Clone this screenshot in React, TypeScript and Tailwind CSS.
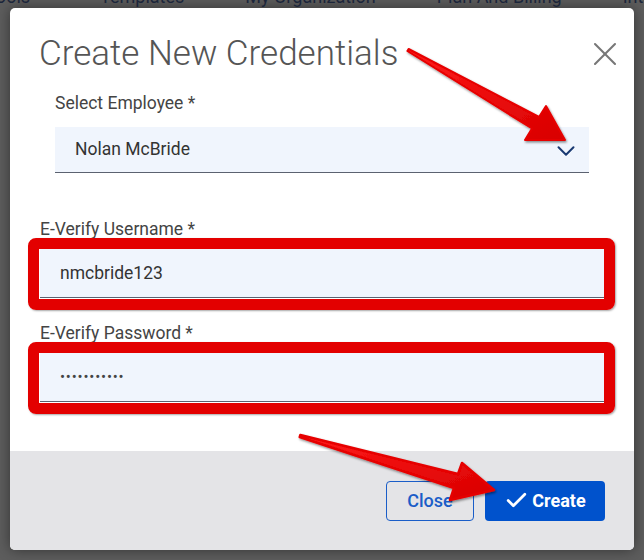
import React from 'react';
import { Check, X, ChevronDown } from 'lucide-react';

type FieldProps = {
  label: string;
  children: React.ReactNode;
  className?: string;
  inputClass?: string;
};

const RedBox = () => (
  <div className="pointer-events-none absolute -bottom-[12px] -left-[12px] -right-[11px] -top-[11px] rounded-[8px] border-[11px] border-[#e30000] shadow-[1px_1px_2px_rgba(0,0,0,0.35)]" />
);

// highlighted input, the red frame is the screenshot annotation
const Field = ({ label, children, className, inputClass }: FieldProps) => (
  <div className={className}>
    <label className="block text-[17.5px] leading-[22px] text-[#444]">{label}</label>
    <div className="relative mt-[9px]">
      <div className={`flex h-[49px] items-center border-b border-[#5b6270] bg-[#f0f5fd] px-[20px] text-[#333] ${inputClass ?? 'text-[17.5px]'}`}>
        {children}
      </div>
      <RedBox />
    </div>
  </div>
);

const navItems = ['Tools', 'Templates', 'My Organization', 'Plan And Billing', 'Integrations'];

export default function App() {
  return (
    <div className="relative h-[560px] w-[644px] overflow-hidden bg-[#5d5d5d] font-['Roboto','Liberation_Sans',sans-serif]">
      {/* page behind the overlay */}
      <div className="h-[8px] overflow-hidden">
        <div className="-ml-[14px] -mt-[13px] flex gap-[61px] whitespace-nowrap text-[18px] leading-[20px] text-[#1b253a]">
          {navItems.map((item, i) => (
            <span key={item} className={i === 0 ? 'mr-[9px]' : ''}>{item}</span>
          ))}
        </div>
      </div>

      {/* modal */}
      <div className="ml-[10px] w-[624px] overflow-hidden rounded-[5px] bg-white shadow-[0_0_14px_rgba(0,0,0,0.45)]">
        <div className="flex items-center justify-between pl-[29px] pr-[9px] pt-[26px]">
          <h2 className="text-[35px] font-light leading-[40px] text-[#555]">Create New Credentials</h2>
          <X size={40} strokeWidth={1.25} className="text-[#777]" />
        </div>

        <div className="px-[45px] pt-[18px]">
          <label className="block text-[17.5px] leading-[22px] text-[#444]">Select Employee *</label>
          <div className="mt-[13px] flex h-[46px] items-center justify-between border-b border-[#5b6270] bg-[#f0f5fd] pl-[20px] pr-[8px] text-[17.5px] text-[#333]">
            <span>Nolan McBride</span>
            <ChevronDown size={30} strokeWidth={1.6} className="mt-[2px] text-[#1a3a72]" />
          </div>
        </div>

        <div className="px-[30px] pt-[45px]">
          <Field label="E-Verify Username *">nmcbride123</Field>
          <Field label="E-Verify Password *" className="mt-[24px]" inputClass="text-[15px] tracking-[0.8px] text-[#444]">
            •••••••••••
          </Field>
        </div>

        <div className="mt-[49px] flex h-[99px] items-center justify-end gap-[11px] bg-[#e4e4e7] pr-[29px]">
          <button className="h-[40px] w-[88px] rounded-[4px] border border-[#1a5dc8] text-[18px] font-medium text-[#1a5dc8]">
            Close
          </button>
          <button className="flex h-[40px] w-[120px] items-center justify-center gap-[3px] rounded-[4px] bg-[#0052cc] text-[18px] font-bold text-white">
            <Check size={25} strokeWidth={2.6} />
            Create
          </button>
        </div>
      </div>

      {/* annotation arrows */}
      <svg className="pointer-events-none absolute left-0 top-0" width="644" height="560" viewBox="0 0 644 560">
        <defs>
          <linearGradient id="arrowRed" x1="0" y1="0" x2="1" y2="1">
            <stop offset="0" stopColor="#ff1a1a" />
            <stop offset="1" stopColor="#d80000" />
          </linearGradient>
          <filter id="arrowShadow" x="-10%" y="-10%" width="120%" height="130%">
            <feDropShadow dx="1" dy="1.5" stdDeviation="1" floodColor="#000" floodOpacity="0.45" />
          </filter>
        </defs>
        <polygon
          points="408.6,49 539,117 546,106 565,140 525,140 532,128.5 407.4,51"
          fill="url(#arrowRed)"
          stroke="#e60000"
          strokeWidth="2"
          strokeLinejoin="round"
          filter="url(#arrowShadow)"
        />
        <polygon
          points="300.3,435 458,474 462,463 494,490 450,500 454,488 299.7,437"
          fill="url(#arrowRed)"
          stroke="#e60000"
          strokeWidth="2.5"
          strokeLinejoin="round"
          filter="url(#arrowShadow)"
        />
      </svg>
    </div>
  );
}
